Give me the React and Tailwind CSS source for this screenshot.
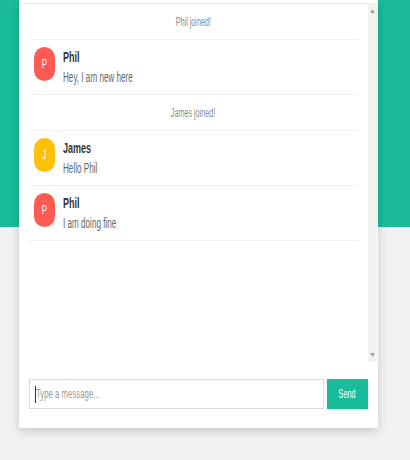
const messages = [
  { type: "join", text: "Phil joined!" },
  { type: "msg", name: "Phil", text: "Hey, I am new here", color: "bg-[#ff5a52]" },
  { type: "join", text: "James joined!" },
  { type: "msg", name: "James", text: "Hello Phil", color: "bg-[#ffc107]" },
  { type: "msg", name: "Phil", text: "I am doing fine", color: "bg-[#ff5a52]" },
];

const Squash = ({ children, className = "" }) => (
  <span className={`inline-block whitespace-nowrap ${className}`}>{children}</span>
);

const ChatRow = ({ m }) => {
  if (m.type === "join") {
    return (
      <div className="h-[36px] flex items-center justify-center border-b border-[#f2f2f2] text-[12px] text-[#8a8a8a]">
        <Squash className="scale-x-[0.6] origin-center">{m.text}</Squash>
      </div>
    );
  }
  return (
    <div className="flex items-start gap-[8px] pl-[5px] pt-[7px] pb-[7px] border-b border-[#f2f2f2]">
      <div className={`w-[21px] h-[34px] rounded-full ${m.color} flex items-center justify-center text-white text-[13px]`}>
        <Squash className="scale-x-[0.6] origin-center">{m.name[0]}</Squash>
      </div>
      <div className="flex flex-col">
        <div className="h-[20px] leading-[20px] text-[15px] font-bold text-[#333]">
          <Squash className="scale-x-[0.6] origin-left">{m.name}</Squash>
        </div>
        <div className="h-[20px] leading-[20px] text-[14px] text-[#666]">
          <Squash className="scale-x-[0.58] origin-left">{m.text}</Squash>
        </div>
      </div>
    </div>
  );
};

const App = () => {
  return (
    <div
      className="min-h-[460px] bg-[linear-gradient(to_bottom,#1abc9c_227px,#f2f2f2_227px)]"
      style={{ fontFamily: '"Liberation Sans", Arial, sans-serif' }}
    >
      <div className="ml-[19px] w-[359px] bg-white shadow-[0_3px_10px_rgba(0,0,0,0.18)]">
        <div className="h-[4px] border-b border-[#ececec]" />

        {/* Messages */}
        <div className="flex h-[358px]">
          <div className="flex-1 px-[10px] overflow-hidden">
            {messages.map((m, i) => (
              <ChatRow key={i} m={m} />
            ))}
          </div>
          <div className="w-[9px] mr-[1px] bg-[#f1f1f1] flex flex-col justify-between items-center py-[5px]">
            <svg width="5" height="4" viewBox="0 0 5 4">
              <path d="M2.5 0 L5 4 L0 4 Z" fill="#a3a3a3" />
            </svg>
            <svg width="5" height="4" viewBox="0 0 5 4">
              <path d="M0 0 L5 0 L2.5 4 Z" fill="#a3a3a3" />
            </svg>
          </div>
        </div>

        {/* Composer */}
        <div className="flex gap-[3px] px-[10px] pt-[17px] pb-[19px]">
          <div className="flex-1 h-[30px] border border-[#dcdcdc] flex items-center pl-[5px] text-[13px] text-[#9a9a9a]">
            <span className="w-px h-[17px] bg-[#333]" />
            <Squash className="scale-x-[0.6] origin-left">Type a message...</Squash>
          </div>
          <button className="w-[41px] h-[30px] bg-[#1abc9c] text-white text-[12px] shadow-[0_1px_2px_rgba(0,0,0,0.15)] flex items-center justify-center">
            <Squash className="scale-x-[0.6] origin-center">Send</Squash>
          </button>
        </div>
      </div>
    </div>
  );
};

export default App;
